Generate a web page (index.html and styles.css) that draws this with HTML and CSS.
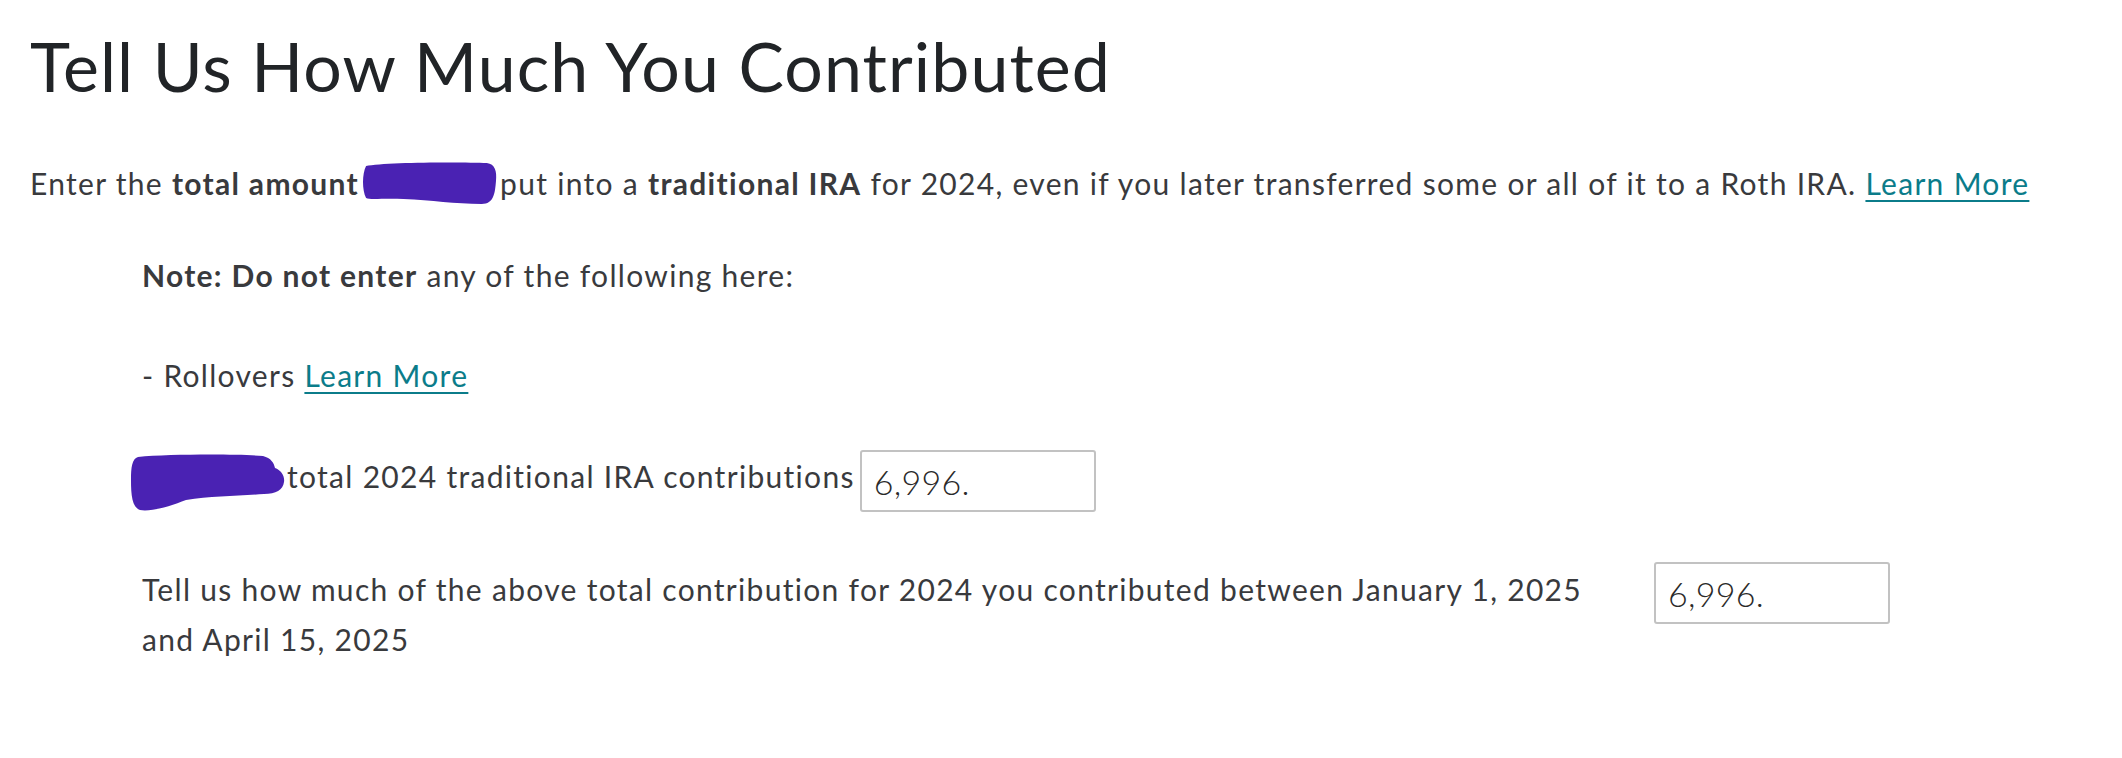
FILE: index.html
```html
<!DOCTYPE html>
<html lang="en">
<head>
<meta charset="utf-8">
<title>Tell Us How Much You Contributed</title>
<link rel="stylesheet" href="styles.css">
</head>
<body>
<main class="page">
  <h1 class="title">Tell Us How Much You Contributed</h1>
  <p class="intro">Enter the <strong>total amount</strong><span class="redact redact-intro"><svg class="scribble scribble-intro" viewBox="0 0 134 44" preserveAspectRatio="none" aria-hidden="true"><path d="M5,5 C22,1 100,1 124,2 C132,3 134,10 133,20 C132,32 131,43 119,43 C92,43 70,39 42,38 C22,37 9,39 5,37 C1,29 1,13 5,5 Z"/></svg></span>put into a <strong>traditional IRA</strong> for 2024, even if you later transferred some or all of it to a Roth IRA. <a class="link" href="#">Learn More</a></p>
  <section class="details">
    <p class="line"><strong>Note: Do not enter</strong> any of the following here:</p>
    <p class="line">- Rollovers <a class="link" href="#">Learn More</a></p>
    <div class="row">
      <label class="label label-inline"><span class="redact redact-row"><svg class="scribble scribble-row" viewBox="0 0 156 58" aria-hidden="true"><path d="M9,3 C40,0 110,0 134,2 C142,4 145,9 146,14 C152,16 156,22 155,28 C154,36 147,40 135,40 C110,42 82,42 57,46 C42,52 22,58 11,56 C3,53 2,41 2,26 C2,13 3,5 9,3 Z"/></svg></span>total 2024 traditional IRA contributions</label>
      <input class="amount" type="text" value="6,996.">
    </div>
    <div class="row">
      <label class="label label-wide">Tell us how much of the above total contribution for 2024 you contributed between January 1, 2025 and April 15, 2025</label>
      <input class="amount" type="text" value="6,996.">
    </div>
  </section>
</main>
</body>
</html>
```
FILE: styles.css
```css
html, body {
  margin: 0;
  padding: 0;
  background: #ffffff;
}

body {
  font-family: Lato, "Open Sans", "Liberation Sans", sans-serif;
  color: #393a3d;
}

.page {
  padding: 26px 30px 40px 30px;
}

.title {
  margin: 0;
  font-size: 68px;
  line-height: 80px;
  font-weight: 400;
  color: #212427;
  letter-spacing: 1.1px;
}

.intro {
  margin: 52px 0 0 0;
  font-size: 30px;
  line-height: 50px;
  letter-spacing: 1.3px;
}

strong {
  font-weight: 700;
  color: #393a3d;
}

.link {
  color: #0b7c8a;
  text-decoration: underline;
  text-decoration-thickness: 2px;
  text-underline-offset: 5px;
}

.redact {
  position: relative;
  display: inline-block;
  vertical-align: baseline;
  height: 1em;
}

.redact-intro {
  width: 141px;
}

.redact-row {
  width: 145px;
}

.scribble {
  position: absolute;
  fill: #4a22b3;
}

.scribble-intro {
  left: 2px;
  top: -4px;
  width: 136px;
  height: 44px;
}

.scribble-row {
  left: -13px;
  top: -4px;
  width: 156px;
  height: 58px;
}

.details {
  margin: 42px 0 0 112px;
  display: flex;
  flex-direction: column;
  gap: 50px;
  font-size: 30px;
  line-height: 50px;
  letter-spacing: 1.3px;
}

.line {
  margin: 0;
}

.row {
  display: flex;
  align-items: flex-start;
}

.label {
  margin-top: 1px;
}

.label-inline {
  margin-right: 5px;
}

.label-wide {
  width: 1470px;
  margin-right: 42px;
  margin-top: 2px;
}

.amount {
  box-sizing: border-box;
  width: 236px;
  height: 62px;
  border: 2px solid #c2c2c2;
  border-radius: 3px;
  padding: 0 12px;
  font-family: Lato, "Open Sans", sans-serif;
  font-weight: 300;
  font-size: 34px;
  letter-spacing: 0.3px;
  color: #2a2a2a;
  background: #ffffff;
  outline: none;
}
```
